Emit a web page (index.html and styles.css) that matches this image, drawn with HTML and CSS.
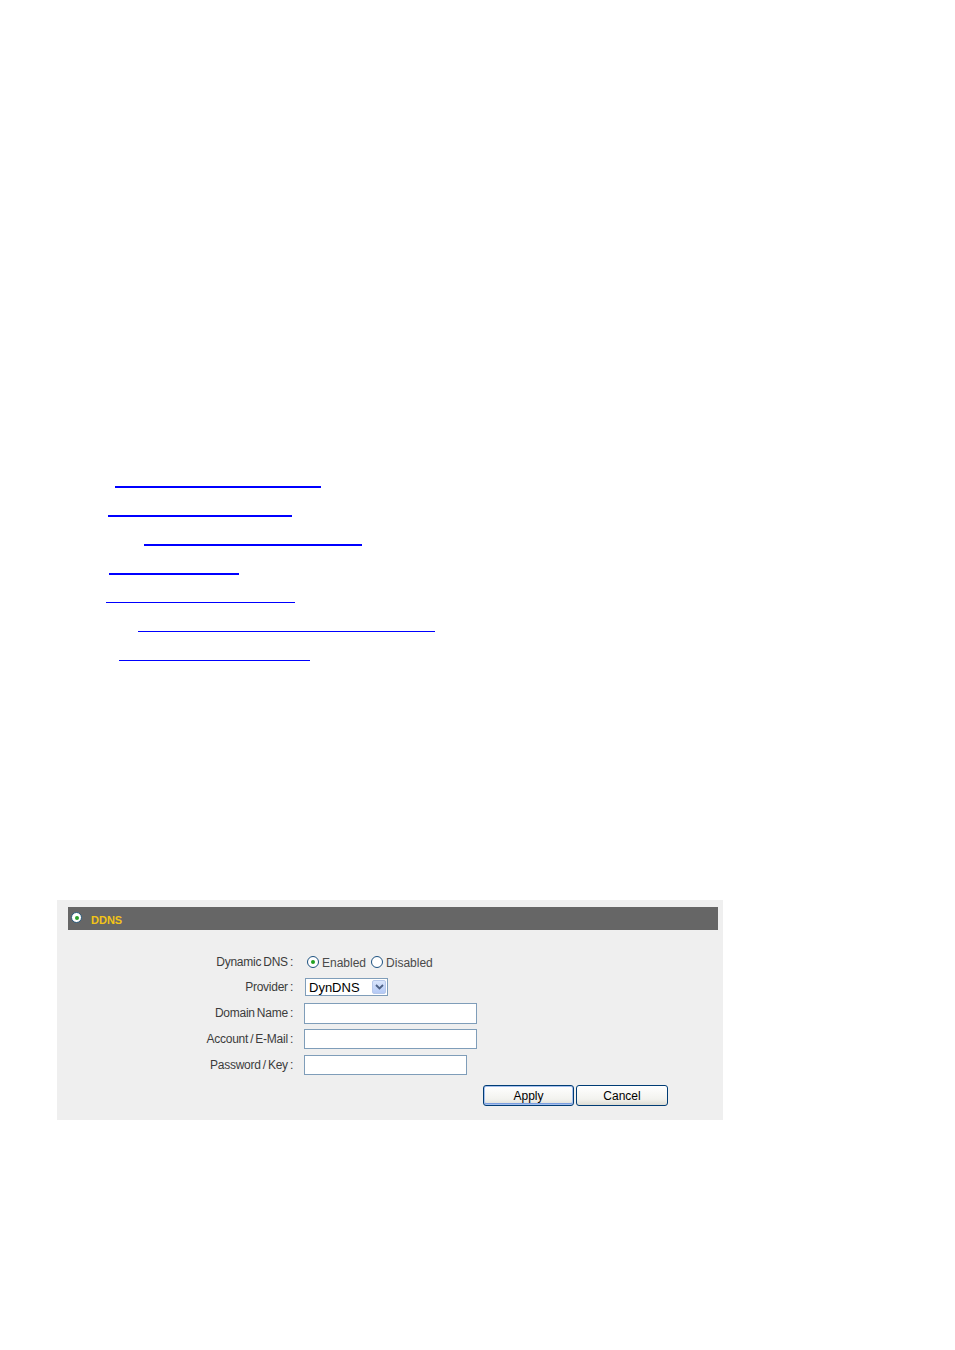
FILE: index.html
```html
<!DOCTYPE html>
<html>
<head>
<meta charset="utf-8">
<link rel="stylesheet" href="styles.css">
</head>
<body>
<div class="links">
  <div class="lrow"><a class="ln thick" style="margin-left:115px;width:206px"></a></div>
  <div class="lrow"><a class="ln thick" style="margin-left:108px;width:184px"></a></div>
  <div class="lrow"><a class="ln thick" style="margin-left:144px;width:218px"></a></div>
  <div class="lrow"><a class="ln thick" style="margin-left:109px;width:130px"></a></div>
  <div class="lrow"><a class="ln thin" style="margin-left:106px;width:189px"></a></div>
  <div class="lrow"><a class="ln thin" style="margin-left:138px;width:297px"></a></div>
  <div class="lrow"><a class="ln thin" style="margin-left:119px;width:191px"></a></div>
</div>

<div class="panel">
  <div class="head">
    <span class="hicon"><span class="hdot"></span></span>
    <span class="htitle">DDNS</span>
  </div>
  <div class="form">
    <div class="lbl r1">Dynamic DNS :</div>
    <div class="ctl r1">
      <span class="radio on"><span class="dot"></span></span><span class="rtext">Enabled</span>
      <span class="radio"></span><span class="rtext">Disabled</span>
    </div>
    <div class="lbl">Provider :</div>
    <div class="ctl">
      <div class="select"><span class="stext">DynDNS</span><span class="sbtn"><svg width="9" height="6" viewBox="0 0 9 6"><path d="M1 1 L4.5 4.5 L8 1" fill="none" stroke="#4d6185" stroke-width="1.8"/></svg></span></div>
    </div>
    <div class="lbl r3">Domain Name :</div>
    <div class="ctl r3"><div class="input w173"></div></div>
    <div class="lbl">Account / E-Mail :</div>
    <div class="ctl"><div class="input w173"></div></div>
    <div class="lbl">Password / Key :</div>
    <div class="ctl"><div class="input w163"></div></div>
    <div class="lbl"></div>
    <div class="ctl btns">
      <div class="btn apply">Apply</div>
      <div class="btn">Cancel</div>
    </div>
  </div>
</div>
</body>
</html>
```
FILE: styles.css
```css
html, body {
  margin: 0;
  padding: 0;
  background: #ffffff;
  font-family: "Liberation Sans", Arial, sans-serif;
}
.links {
  padding-top: 486px;
  display: flex;
  flex-direction: column;
}
.lrow {
  height: 29px;
}
.ln {
  display: block;
  background: #0000ff;
}
.ln.thick { height: 2px; }
.ln.thin { height: 1px; }

.panel {
  margin-top: 211px;
  margin-left: 57px;
  width: 666px;
  height: 220px;
  background: #efefef;
  padding: 7px 5px 0 11px;
  box-sizing: border-box;
}
.head {
  height: 23px;
  background: #666666;
  display: flex;
  align-items: center;
}
.hicon {
  width: 11px;
  height: 11px;
  border-radius: 50%;
  background: #ffffff;
  border: 1px solid #2a5a7a;
  box-sizing: border-box;
  margin-left: 3px;
  margin-top: -2px;
  display: flex;
  align-items: center;
  justify-content: center;
}
.hdot {
  width: 4px;
  height: 4px;
  border-radius: 50%;
  background: #2aa02a;
}
.htitle {
  margin-left: 9px;
  color: #f2c418;
  font-weight: bold;
  font-size: 11px;
  margin-top: 3px;
}
.form {
  display: grid;
  grid-template-columns: 236px auto;
  column-gap: 11px;
  row-gap: 6px;
  margin-top: 21px;
  margin-left: -11px;
  grid-auto-rows: 20px;
}
.lbl {
  text-align: right;
  font-size: 12px;
  color: #3c3c3c;
  display: flex;
  align-items: center;
  justify-content: flex-end;
  word-spacing: -1px;
  letter-spacing: -0.25px;
}
.lbl.r1 { padding-top: 2px; }
.ctl {
  display: flex;
  align-items: center;
  font-size: 12px;
  color: #4a4a4a;
}
.ctl.r1 { padding-left: 3px; padding-top: 3px; }
.radio {
  width: 12px;
  height: 12px;
  border-radius: 50%;
  border: 1px solid #1c5180;
  background: #ffffff;
  box-sizing: border-box;
  display: inline-flex;
  align-items: center;
  justify-content: center;
  margin-top: -1px;
}
.radio .dot {
  width: 4px;
  height: 4px;
  border-radius: 50%;
  background: #21a121;
}
.rtext {
  margin-left: 3px;
  margin-right: 5px;
}
.select {
  width: 83px;
  height: 18px;
  border: 1px solid #7f9db9;
  background: #ffffff;
  box-sizing: border-box;
  display: flex;
  align-items: center;
  justify-content: space-between;
  margin-left: 1px;
}
.stext {
  font-size: 13px;
  color: #000000;
  margin-left: 3px;
}
.sbtn {
  width: 14px;
  height: 14px;
  margin-right: 1px;
  border-radius: 2px;
  background: linear-gradient(#d9e5fb, #b4c9f5);
  border: 1px solid #b7c8ea;
  box-sizing: border-box;
  display: flex;
  align-items: center;
  justify-content: center;
}
.input {
  height: 20px;
  border: 1px solid #7f9db9;
  background: #ffffff;
  box-sizing: border-box;
}
.r3 .input { height: 21px; }
.w173 { width: 173px; }
.w163 { width: 163px; }
.btns {
  padding-left: 179px;
  margin-top: 4px;
  height: 21px;
  gap: 2px;
}
.btn {
  width: 92px;
  height: 21px;
  box-sizing: border-box;
  border: 1px solid #003c74;
  border-radius: 3px;
  background: linear-gradient(#ffffff, #f2f2ee 70%, #dcdcd4);
  font-size: 12px;
  color: #000000;
  display: flex;
  align-items: center;
  justify-content: center;
}
.btn.apply {
  width: 91px;
  box-shadow: inset 0 0 0 1px #a6c0ed, inset 0 -1px 0 1px #7a9ee0;
}
```
